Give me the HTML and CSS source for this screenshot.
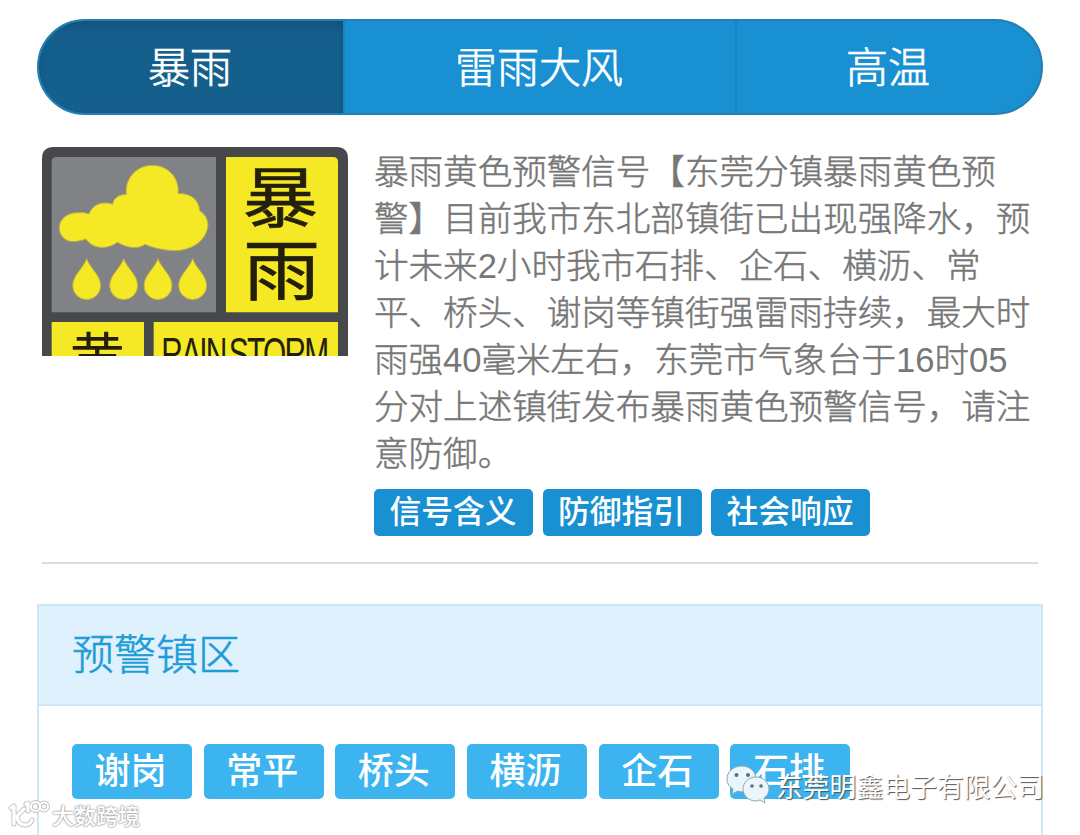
FILE: index.html
```html
<!DOCTYPE html>
<html lang="zh-CN">
<head>
    <meta charset="UTF-8">
    <meta name="viewport" content="width=device-width, initial-scale=1.0">
    <title>暴雨黄色预警信号</title>
    <link rel="stylesheet" href="styles.css">
</head>
<body>

<div class="tabs">
    <div class="tab active">暴雨</div>
    <div class="tab tab-wide">雷雨大风</div>
    <div class="tab">高温</div>
</div>

<div class="warning">
    <svg class="sign" viewBox="36 21 918 627">
        <path fill="#47484c" d="M36 648V56Q36 21 71 21H919Q954 21 954 56V648Z"/>
        <path fill="#808285" d="M65 517V66Q65 51 80 51H558V517Z"/>
        <path fill="#f5e926" d="M588 51H909Q924 51 924 66V517H588Z"/>
        <path fill="#f5e926" d="M65 546H342V648H65ZM371 546H924V648H371Z"/>
        <!-- 云 -->
        <path fill="#f5e926" stroke="#b9b04c" stroke-width="3" d="M168 297C152 303 135 306 120 304C100 300 88 283 88 262C88 235 115 217 145 218Q165 216 177 222C185 200 205 188 225 189Q240 188 248 193C250 175 268 162 289 164C283 118 318 76 366 76C416 76 450 116 444 161C480 158 508 180 509 212C525 222 534 238 534 255C530 300 490 332 430 332C400 330 370 325 345 313C325 328 295 326 262 307C235 328 190 330 168 297Z"/>
        <!-- 雨滴 -->
        <g fill="#f5e926" stroke="#b9b04c" stroke-width="3">
            <path d="M170 356C180 385 212 405 212 437A42 42 0 0 1 128 437C128 405 160 385 170 356Z"/>
            <path d="M281 356C291 385 323 405 323 437A42 42 0 0 1 239 437C239 405 271 385 281 356Z"/>
            <path d="M384 356C394 385 426 405 426 437A42 42 0 0 1 342 437C342 405 374 385 384 356Z"/>
            <path d="M488 356C498 385 530 405 530 437A42 42 0 0 1 446 437C446 405 478 385 488 356Z"/>
        </g>
        <g class="sign-text">
            <text transform="translate(638 246) scale(1.14 1)" font-size="198">暴</text>
            <text transform="translate(640 464) scale(1.14 1)" font-size="202">雨</text>
            <text class="sign-color" x="119" y="713" font-size="165">黄</text>
            <text class="sign-en" transform="translate(394 688) scale(.67 1)" font-size="134">RAIN STORM</text>
        </g>
    </svg>
    <div class="detail">
        <p>暴雨黄色预警信号【东莞分镇暴雨黄色预<br>警】目前我市东北部镇街已出现强降水，预<br>计未来<span class="num">2</span>小时我市石排、企石、横沥、常<br>平、桥头、谢岗等镇街强雷雨持续，最大时<br>雨强<span class="num">40</span>毫米左右，东莞市气象台于<span class="num">16</span>时<span class="num">05</span><br>分对上述镇街发布暴雨黄色预警信号，请注<br>意防御。</p>
        <div class="links">
            <span class="link">信号含义</span>
            <span class="link">防御指引</span>
            <span class="link">社会响应</span>
        </div>
    </div>
</div>

<div class="panel">
    <div class="panel-title">预警镇区</div>
    <div class="towns">
        <span class="town">谢岗</span>
        <span class="town">常平</span>
        <span class="town">桥头</span>
        <span class="town">横沥</span>
        <span class="town">企石</span>
        <span class="town">石排</span>
    </div>
</div>

<div class="mark mark-left">
    <svg width="42" height="32" viewBox="0 0 42 32">
        <g fill="none" stroke-linecap="round" stroke-linejoin="round">
            <path stroke="#c2c2c2" stroke-width="5" d="M3 10L6 8V26M16 11L9 18Q10 27 17 27Q22 27 24 22M18 6L20 5V13"/>
            <path stroke="#c2c2c2" stroke-width="4" d="M32 8.500A4.500 4.500 0 1 1 23 8.500A4.500 4.500 0 1 1 32 8.500A4 4 0 1 1 40 8.500A4 4 0 1 1 32 8.500"/>
            <path stroke="#fff" stroke-width="3.200" d="M3 10L6 8V26M16 11L9 18Q10 27 17 27Q22 27 24 22M18 6L20 5V13"/>
            <path stroke="#fff" stroke-width="2" d="M32 8.500A4.500 4.500 0 1 1 23 8.500A4.500 4.500 0 1 1 32 8.500A4 4 0 1 1 40 8.500A4 4 0 1 1 32 8.500"/>
        </g>
    </svg>
    <span>大数跨境</span>
</div>

<div class="mark mark-right">
    <svg width="46" height="40" viewBox="0 0 46 40">
        <g fill="#eaf6fb" stroke="#8fa5af" stroke-width="1">
            <path d="M16 1C7 1 1 7 1 14C1 19 4 22 7 24L6 29L12 26Q14 27 18 27C26 26 30 20 30 14C30 7 24 1 16 1Z"/>
            <path d="M30 12C22 12 17 18 17 24C17 31 23 36 30 36L34 35L39 38L38 33C41 31 43 28 43 24C43 17 37 12 30 12Z"/>
        </g>
        <g fill="#58727f">
            <circle cx="10.500" cy="10" r="2"/>
            <circle cx="22" cy="10" r="2"/>
            <circle cx="26" cy="21" r="1.800"/>
            <circle cx="35" cy="21" r="1.800"/>
        </g>
    </svg>
    <span>东莞明鑫电子有限公司</span>
</div>

</body>
</html>
```
FILE: styles.css
```css
* {
    box-sizing: border-box;
}
body {
    margin: 0;
    padding: 19px 37px 0;
    height: 835px;
    overflow: hidden;
    position: relative;
    background-color: #fff;
    font-family: "Liberation Sans", "Noto Sans CJK SC", sans-serif;
}
.tabs {
    display: flex;
    height: 96px;
    border: 2px solid #237fb0;
    border-radius: 48px;
    overflow: hidden;
    background-color: #1890d2;
}
.tab {
    width: 306px;
    padding-right: 2px;
    line-height: 95px;
    font-size: 42px;
    font-weight: 300;
    -webkit-text-stroke: 0.7px #fff;
    text-align: center;
    color: #fff;
    border-left: 2px solid #1585c2;
}
.tab-wide {
    width: 392px;
}
.tab.active {
    width: 304px;
    border-left: none;
    background-color: #155f8d;
    box-shadow: inset 0 5px 8px rgba(0, 30, 60, 0.2);
}
.warning {
    display: flex;
    align-items: flex-start;
    margin: 0 5px;
    height: 449px;
    padding-top: 32px;
    border-bottom: 2px solid #ddd;
}
.sign {
    width: 306px;
    height: 209px;
    flex-shrink: 0;
}
.sign-text {
    font-family: "Noto Sans CJK SC", sans-serif;
    fill: #231f0c;
    stroke: #231f0c;
    stroke-width: 2px;
}
.sign-color {
    stroke: none;
}
.sign-en {
    font-family: "Liberation Sans", sans-serif;
    letter-spacing: -8px;
    word-spacing: -15px;
    stroke: none;
}
.detail {
    margin-left: 26px;
}
.detail p {
    margin: 2px 0 0;
    font-size: 34.55px;
    font-weight: 300;
    -webkit-text-stroke: 0.5px #777;
    line-height: 47px;
    color: #777;
    white-space: nowrap;
}
.num {
    -webkit-text-stroke: 0;
}
.links {
    display: flex;
    gap: 9.5px;
    margin-top: 11px;
}
.link {
    width: 159px;
    height: 47px;
    padding-right: 1px;
    line-height: 47px;
    border-radius: 5px;
    background-color: #1890d2;
    color: #fff;
    font-size: 31.8px;
    font-weight: 500;
    text-align: center;
}
.panel {
    margin-top: 40px;
    height: 231px;
    border: 2px solid #cce8f6;
    border-bottom: none;
}
.panel-title {
    height: 100px;
    padding-left: 33px;
    line-height: 99px;
    font-size: 42px;
    font-weight: 300;
    -webkit-text-stroke: 0.6px #1f9cd8;
    color: #1f9cd8;
    background-color: #dff1fc;
    border-bottom: 2px solid #cce8f6;
}
.towns {
    display: flex;
    gap: 11.7px;
    padding: 38px 33px 0;
}
.town {
    width: 120px;
    height: 55px;
    padding-right: 3px;
    line-height: 56px;
    border-radius: 5px;
    background-color: #3cb4f0;
    color: #fff;
    font-size: 36px;
    font-weight: 500;
    text-align: center;
}
/* 水印 */
.mark {
    position: absolute;
    display: flex;
    align-items: center;
    color: #fff;
    white-space: nowrap;
}
.mark-left {
    left: 8px;
    top: 798px;
    height: 32px;
    gap: 2px;
    font-size: 22px;
    font-weight: 500;
    text-shadow: 0 0 2px #999, 0 0 2px #aaa, 0 0 1px #aaa;
}
.mark-right {
    left: 726px;
    top: 764px;
    height: 42px;
    gap: 4px;
    font-size: 26.8px;
    font-weight: 400;
    text-shadow: 1px 1px 1px #555;
}
```
